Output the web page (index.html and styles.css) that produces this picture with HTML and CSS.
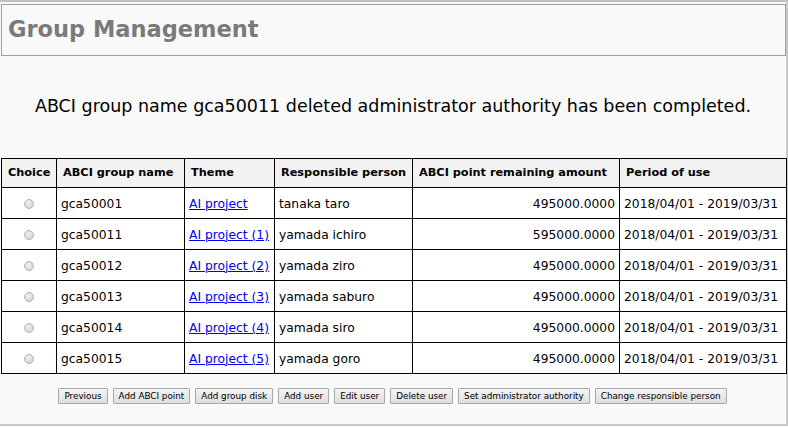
FILE: index.html
```html
<!DOCTYPE html>
<html>
<head>
<meta charset="utf-8">
<link rel="stylesheet" href="styles.css">
</head>
<body>
<div class="page">
  <div class="header"><h1 class="title">Group Management</h1></div>
  <p class="message">ABCI group name gca50011 deleted administrator authority has been completed.</p>
  <table class="grid">
    <colgroup>
      <col class="c1"><col class="c2"><col class="c3"><col class="c4"><col class="c5"><col class="c6">
    </colgroup>
    <thead>
      <tr><th>Choice</th><th>ABCI group name</th><th>Theme</th><th>Responsible person</th><th>ABCI point remaining amount</th><th>Period of use</th></tr>
    </thead>
    <tbody>
      <tr><td class="choice"><span class="radio"></span></td><td>gca50001</td><td><a href="#">AI project</a></td><td>tanaka taro</td><td class="num">495000.0000</td><td>2018/04/01 - 2019/03/31</td></tr>
      <tr><td class="choice"><span class="radio"></span></td><td>gca50011</td><td><a href="#">AI project (1)</a></td><td>yamada ichiro</td><td class="num">595000.0000</td><td>2018/04/01 - 2019/03/31</td></tr>
      <tr><td class="choice"><span class="radio"></span></td><td>gca50012</td><td><a href="#">AI project (2)</a></td><td>yamada ziro</td><td class="num">495000.0000</td><td>2018/04/01 - 2019/03/31</td></tr>
      <tr><td class="choice"><span class="radio"></span></td><td>gca50013</td><td><a href="#">AI project (3)</a></td><td>yamada saburo</td><td class="num">495000.0000</td><td>2018/04/01 - 2019/03/31</td></tr>
      <tr><td class="choice"><span class="radio"></span></td><td>gca50014</td><td><a href="#">AI project (4)</a></td><td>yamada siro</td><td class="num">495000.0000</td><td>2018/04/01 - 2019/03/31</td></tr>
      <tr><td class="choice"><span class="radio"></span></td><td>gca50015</td><td><a href="#">AI project (5)</a></td><td>yamada goro</td><td class="num">495000.0000</td><td>2018/04/01 - 2019/03/31</td></tr>
    </tbody>
  </table>
  <div class="actions">
    <button class="btn">Previous</button>
    <button class="btn">Add ABCI point</button>
    <button class="btn">Add group disk</button>
    <button class="btn">Add user</button>
    <button class="btn">Edit user</button>
    <button class="btn">Delete user</button>
    <button class="btn">Set administrator authority</button>
    <button class="btn">Change responsible person</button>
  </div>
</div>
</body>
</html>
```

FILE: styles.css
```css
html, body {
  margin: 0;
  padding: 0;
  background: #f9f9f9;
}
body {
  font-family: "DejaVu Sans", Verdana, sans-serif;
  color: #000;
}
.page {
  width: 786px;
  height: 422px;
  border-top: 2px solid #c0c0c0;
  border-right: 2px solid #c8c8c8;
  border-bottom: 2px solid #c8c8c8;
  background: #f9f9f9;
  box-sizing: content-box;
}
.header {
  margin: 2px 0 0 1px;
  width: 783px;
  height: 50px;
  border: 1px solid #a0a0a0;
  display: flex;
  align-items: center;
}
.title {
  margin: 0 0 2px 6px;
  font-size: 22.5px;
  font-weight: bold;
  color: #7a7a7a;
}
.message {
  margin: 38px 0 0 0;
  text-align: center;
  font-size: 17.5px;
  line-height: 24px;
  width: 786px;
}
.grid {
  margin: 40px 0 0 1px;
  width: 785px;
  border-collapse: collapse;
  table-layout: fixed;
  font-size: 12.3px;
}
.c1 { width: 55px; }
.c2 { width: 128px; }
.c3 { width: 90px; }
.c4 { width: 138px; }
.c5 { width: 207px; }
.c6 { width: 167px; }
.grid th, .grid td {
  border: 1px solid #000;
  white-space: nowrap;
  overflow: hidden;
}
.grid th {
  background: #f2f2f2;
  text-align: left;
  font-weight: bold;
  font-size: 11.3px;
  padding: 0 6px 1px;
  height: 27px;
}
.grid td {
  padding: 1px 4px 0;
  height: 29px;
  background: #fff;
}
.grid td.choice {
  text-align: center;
}
.grid td.num {
  text-align: right;
}
.grid a {
  color: #0000ee;
  text-decoration: underline;
}
.radio {
  display: inline-block;
  width: 8px;
  height: 8px;
  border-radius: 50%;
  border: 1px solid #b4b4b4;
  background: radial-gradient(circle at 40% 35%, #f0f0f0, #cfcfcf);
  vertical-align: middle;
}
.actions {
  margin-top: 14px;
  display: flex;
  justify-content: center;
  gap: 5px;
  width: 785px;
}
.btn {
  font-family: "DejaVu Sans", Verdana, sans-serif;
  font-size: 8.8px;
  color: #000;
  height: 16px;
  padding: 0 5px;
  border: 1px solid #a9a9a9;
  border-radius: 1px;
  background: linear-gradient(#f4f4f4, #dedede);
  line-height: 14px;
}
```
